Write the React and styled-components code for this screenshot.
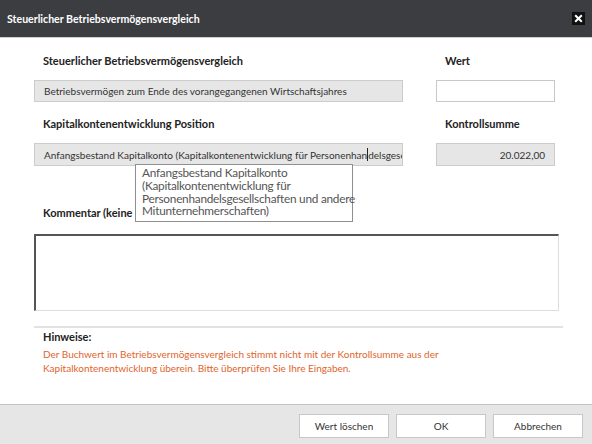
import React from "react";
import styled, { createGlobalStyle } from "styled-components";

const GlobalStyle = createGlobalStyle`
  html, body {
    margin: 0;
    padding: 0;
    background: #ffffff;
  }
  body {
    font-family: Lato, "Open Sans", "Liberation Sans", sans-serif;
    color: #333333;
  }
`;

const Dialog = styled.div`
  position: relative;
  width: 592px;
  height: 444px;
  display: flex;
  flex-direction: column;
  background: #ffffff;
  overflow: hidden;
`;

const TitleBar = styled.div`
  height: 37px;
  flex: none;
  display: flex;
  align-items: center;
  justify-content: space-between;
  padding: 0 7px;
  background: #3c3d41;
  border-bottom: 1px solid #cfcfcf;
  color: #ffffff;
  font-size: 10.6px;
  font-weight: 700;
`;

const CloseButton = styled.div`
  width: 13px;
  height: 13px;
  background: #111111;
  display: flex;
  align-items: center;
  justify-content: center;
`;

const Body = styled.div`
  flex: 1;
  display: flex;
  flex-direction: column;
  padding: 0 29px 0 34px;
`;

const FieldGrid = styled.div`
  display: grid;
  grid-template-columns: 369px 119px;
  column-gap: 33px;
  align-items: start;
`;

const Label = styled.div`
  height: 16px;
  line-height: 16px;
  padding-left: 9px;
  font-size: 11px;
  font-weight: 700;
  color: #222222;
  white-space: nowrap;
  margin-top: ${(p) => p.$top}px;
`;

const Field = styled.div`
  box-sizing: border-box;
  height: ${(p) => p.$height}px;
  margin-top: 11px;
  padding: 0 9px;
  display: flex;
  align-items: center;
  justify-content: ${(p) => (p.$right ? "flex-end" : "flex-start")};
  background: ${(p) => (p.$readonly ? "#e6e6e6" : "#ffffff")};
  border: 1px solid ${(p) => (p.$readonly ? "#cccccc" : "#c8c8c8")};
  font-size: 10px;
  color: #333333;
  white-space: nowrap;
  overflow: hidden;
`;

const Caret = styled.span`
  display: inline-block;
  flex: none;
  width: 1px;
  height: 13px;
  background: #222222;
`;

const Comment = styled.div`
  box-sizing: border-box;
  width: 525px;
  height: 77px;
  margin-top: 13px;
  border-top: 2px solid #555555;
  border-left: 2px solid #555555;
  border-right: 1px solid #dddddd;
  border-bottom: 1px solid #dddddd;
  background: #ffffff;
`;

const Divider = styled.div`
  width: 529px;
  height: 2px;
  margin-top: 15px;
  background: #e2e2e2;
`;

const Notes = styled.div`
  padding-left: 9px;
  margin-top: 1px;
`;

const NotesTitle = styled.div`
  font-size: 11px;
  font-weight: 700;
  color: #222222;
  line-height: 16px;
`;

const NotesText = styled.div`
  margin-top: 2px;
  font-size: 10px;
  line-height: 14px;
  color: #e0652c;
`;

const Tooltip = styled.div`
  position: absolute;
  left: 135px;
  top: 164px;
  box-sizing: border-box;
  width: 218px;
  height: 58px;
  padding: 2px 0 0 6px;
  background: #ffffff;
  border: 1px solid #8f8f8f;
  font-size: 11.8px;
  line-height: 12.8px;
  letter-spacing: -0.25px;
  color: #555555;
  white-space: nowrap;
`;

const Footer = styled.div`
  height: 40px;
  flex: none;
  box-sizing: border-box;
  display: flex;
  justify-content: flex-end;
  align-items: flex-start;
  gap: 7px;
  padding: 9px 9px 0 0;
  background: #e6e6e6;
  border-top: 1px solid #c4c4c4;
`;

const Button = styled.button`
  width: 90px;
  height: 24px;
  padding: 0;
  background: #ffffff;
  border: 1px solid #c8c8c8;
  font-family: inherit;
  font-size: 10px;
  color: #333333;
  cursor: pointer;
`;

export default function App() {
  return (
    <>
      <GlobalStyle />
      <Dialog>
        <TitleBar>
          <span>Steuerlicher Betriebsvermögensvergleich</span>
          <CloseButton>
            <svg width="9" height="9" viewBox="0 0 9 9">
              <path
                d="M1.2 1.2 L7.8 7.8 M7.8 1.2 L1.2 7.8"
                stroke="#ffffff"
                strokeWidth="2"
              />
            </svg>
          </CloseButton>
        </TitleBar>
        <Body>
          <FieldGrid>
            <Label $top={15}>Steuerlicher Betriebsvermögensvergleich</Label>
            <Label $top={15}>Wert</Label>
            <Field $readonly $height={22}>
              Betriebsvermögen zum Ende des vorangegangenen Wirtschaftsjahres
            </Field>
            <Field $height={22} />
            <Label $top={14}>Kapitalkontenentwicklung Position</Label>
            <Label $top={14}>Kontrollsumme</Label>
            <Field $readonly $height={23}>
              Anfangsbestand Kapitalkonto (Kapitalkontenentwicklung für
              Personenhan
              <Caret />
              delsgesellschaften und andere Mitunternehmerschaften)
            </Field>
            <Field $readonly $right $height={23}>
              20.022,00
            </Field>
          </FieldGrid>
          <Label $top={39}>Kommentar (keine Umlaute)</Label>
          <Comment />
          <Divider />
          <Notes>
            <NotesTitle>Hinweise:</NotesTitle>
            <NotesText>
              Der Buchwert im Betriebsvermögensvergleich stimmt nicht mit der
              Kontrollsumme aus der
              <br />
              Kapitalkontenentwicklung überein. Bitte überprüfen Sie Ihre
              Eingaben.
            </NotesText>
          </Notes>
        </Body>
        <Footer>
          <Button>Wert löschen</Button>
          <Button>OK</Button>
          <Button>Abbrechen</Button>
        </Footer>
        <Tooltip>
          Anfangsbestand Kapitalkonto
          <br />
          (Kapitalkontenentwicklung für
          <br />
          Personenhandelsgesellschaften und andere
          <br />
          Mitunternehmerschaften)
        </Tooltip>
      </Dialog>
    </>
  );
}
